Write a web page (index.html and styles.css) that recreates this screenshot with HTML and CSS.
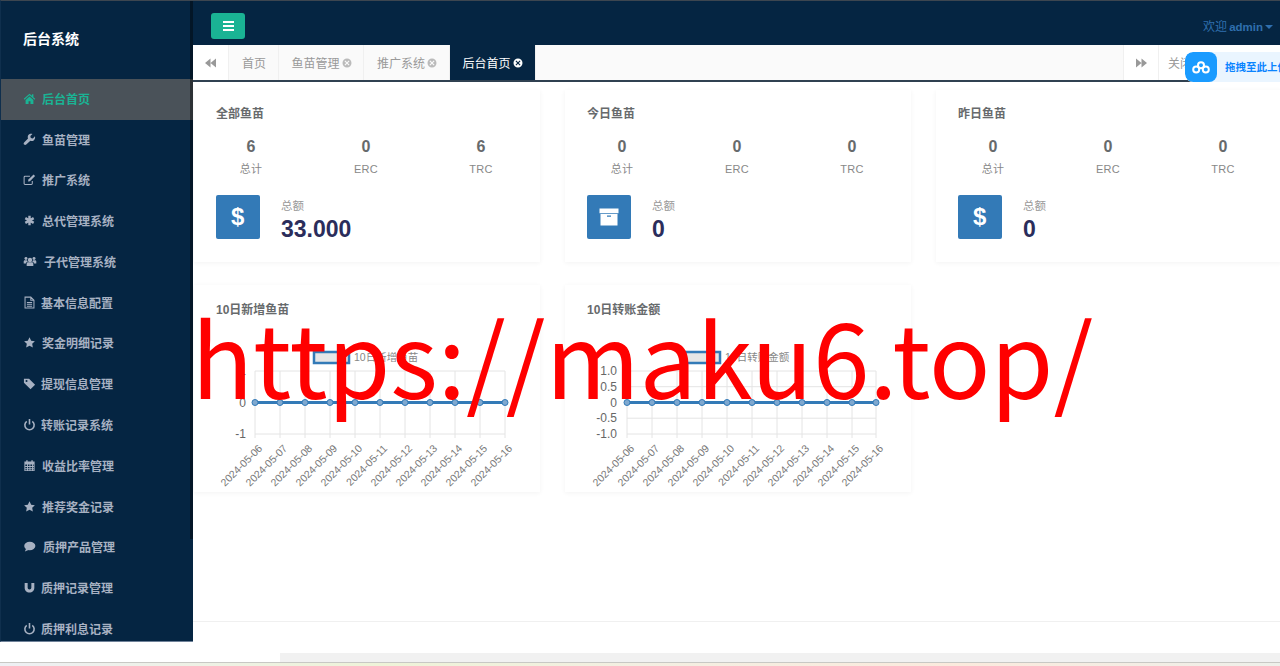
FILE: index.html
```html
<!DOCTYPE html>
<html lang="zh-CN">

<head>
    <meta charset="UTF-8">
    <meta name="viewport" content="width=device-width, initial-scale=1.0">
    <title>后台系统</title>
    <link rel="stylesheet" href="styles.css">
</head>

<body>
    <svg class="defs" width="0" height="0">
        <symbol id="i-home" viewBox="0 0 14 14"><path d="M7 1.800.8 7.400l.8.900L7 3.400l5.400 4.900.8-.9-2-1.800V2.400H9.600v1.700zM2.800 8.600 7 4.800l4.200 3.800v4.200H8V10H6v2.800H2.800z"/></symbol>
        <symbol id="i-wrench" viewBox="0 0 14 14"><path d="M12.900 3.600 10.600 5.800 8.400 5.300 7.900 3.200 10.200 1C8.500.5 6.700 1 5.800 2.200 5 3.300 4.900 4.700 5.400 5.800L1.200 10.200C.5 10.900.6 11.900 1.200 12.500 1.900 13.200 2.900 13.200 3.500 12.500L7.900 8.400C9.200 9 10.700 8.800 11.800 7.800 12.900 6.800 13.300 5.100 12.900 3.600z"/></symbol>
        <symbol id="i-edit" viewBox="0 0 14 14"><path d="M10 8.500V11.300C10 11.900 9.600 12.300 9 12.300H2.200C1.600 12.300 1.200 11.900 1.200 11.300V4.500C1.200 3.900 1.600 3.500 2.200 3.500H7.500" fill="none" stroke="currentColor" stroke-width="1.100"/><path d="M11.400 1.600 13 3.200 7.500 8.800 5.400 9.200 5.800 7.100z"/></symbol>
        <symbol id="i-asterisk" viewBox="0 0 14 14"><path d="M7 1.800v10.400M2.500 4.400l9 5.200M11.500 4.400l-9 5.200" fill="none" stroke="currentColor" stroke-width="2.600"/></symbol>
        <symbol id="i-users" viewBox="0 0 16 14"><circle cx="8" cy="5.300" r="2.500"/><circle cx="3.400" cy="3.600" r="1.700"/><circle cx="12.600" cy="3.600" r="1.700"/><path d="M4.200 12.200V9.600C4.200 8.500 5 7.800 6 7.800H10C11 7.800 11.800 8.500 11.800 9.600V12.200zM.8 9.300V7C.8 6 1.500 5.600 2.300 5.600H4.600C4.800 6.300 5.100 6.800 5.500 7.200 4.200 7.400 3.400 8.200 3.300 9.300zM15.200 9.300V7C15.200 6 14.500 5.600 13.700 5.600H11.400C11.200 6.300 10.900 6.800 10.500 7.200 11.800 7.400 12.600 8.200 12.700 9.300z"/></symbol>
        <symbol id="i-file" viewBox="0 0 14 14"><path d="M2.200 1.200H8.400L11.800 4.600V12.800H2.200zM8.400 1.200V4.600H11.800M4.200 7H9.800M4.200 9H9.800M4.200 11H9.800" fill="none" stroke="currentColor" stroke-width="1.100"/></symbol>
        <symbol id="i-star" viewBox="0 0 14 14"><path d="M7 1.300 8.800 5l4 .6-2.900 2.800.7 4L7 10.500l-3.600 1.900.7-4L1.200 5.600l4-.6z"/></symbol>
        <symbol id="i-tag" viewBox="0 0 14 14"><path fill-rule="evenodd" d="M1 1.800H6.500L13 8.300 8.100 13.200 1 6.300zM3.800 3.200A1.100 1.100 0 1 0 3.800 5.400 1.100 1.100 0 1 0 3.800 3.200z"/></symbol>
        <symbol id="i-power" viewBox="0 0 14 14"><path d="M4 3.600A5 5 0 1 0 10 3.600M7 1.200V7" fill="none" stroke="currentColor" stroke-width="1.700"/></symbol>
        <symbol id="i-calendar" viewBox="0 0 14 14"><path fill-rule="evenodd" d="M1.500 2.800H3.500V1.300H5V2.800H9V1.300H10.500V2.800H12.500V13H1.500zM2.500 6V7.600H4.300V6zM5.300 6V7.600H7V6zM8 6V7.600H9.700V6zM10.700 6V7.600H11.500V6zM2.500 8.500V10H4.300V8.500zM5.300 8.500V10H7V8.500zM8 8.500V10H9.700V8.500zM10.700 8.500V10H11.500V8.500zM2.500 11V12H4.300V11zM5.300 11V12H7V11zM8 11V12H9.700V11zM10.700 11V12H11.500V11z"/></symbol>
        <symbol id="i-comment" viewBox="0 0 14 14"><ellipse cx="7.300" cy="6.500" rx="6" ry="4.500"/><path d="M3.500 9 2 12.500 6.500 10.500z"/></symbol>
        <symbol id="i-magnet" viewBox="0 0 14 14"><path d="M1.800 2.200H5V7C5 8.300 5.800 9.100 7 9.100S9 8.300 9 7V2.200H12.200V7.200C12.200 10.200 10 12.500 7 12.500S1.800 10.200 1.800 7.200z"/></symbol>
        <symbol id="i-close" viewBox="0 0 10 10"><path fill-rule="evenodd" d="M5 .5a4.500 4.500 0 1 0 0 9 4.500 4.500 0 1 0 0-9zM3.300 2.500 5 4.200 6.700 2.500 7.500 3.300 5.800 5 7.500 6.700 6.700 7.500 5 5.800 3.300 7.500 2.500 6.700 4.200 5 2.500 3.300z"/></symbol>
        <symbol id="i-back" viewBox="0 0 12 10"><path d="M6 0v10L0 5zM12 0v10L6 5z"/></symbol>
    </svg>

    <div class="app">
        <aside class="sidebar">
            <div class="sidebar-thumb"></div>
            <div class="logo">后台系统</div>
            <ul class="nav">
                <li class="nav-item active"><svg class="icon"><use href="#i-home"/></svg>后台首页</li>
                <li class="nav-item"><svg class="icon"><use href="#i-wrench"/></svg>鱼苗管理</li>
                <li class="nav-item"><svg class="icon"><use href="#i-edit"/></svg>推广系统</li>
                <li class="nav-item"><svg class="icon"><use href="#i-asterisk"/></svg>总代管理系统</li>
                <li class="nav-item"><svg class="icon icon-wide"><use href="#i-users"/></svg>子代管理系统</li>
                <li class="nav-item"><svg class="icon icon-narrow"><use href="#i-file"/></svg>基本信息配置</li>
                <li class="nav-item"><svg class="icon"><use href="#i-star"/></svg>奖金明细记录</li>
                <li class="nav-item"><svg class="icon icon-narrow"><use href="#i-tag"/></svg>提现信息管理</li>
                <li class="nav-item"><svg class="icon icon-narrow"><use href="#i-power"/></svg>转账记录系统</li>
                <li class="nav-item"><svg class="icon"><use href="#i-calendar"/></svg>收益比率管理</li>
                <li class="nav-item"><svg class="icon"><use href="#i-star"/></svg>推荐奖金记录</li>
                <li class="nav-item"><svg class="icon icon-mid"><use href="#i-comment"/></svg>质押产品管理</li>
                <li class="nav-item"><svg class="icon icon-narrow"><use href="#i-magnet"/></svg>质押记录管理</li>
                <li class="nav-item"><svg class="icon icon-narrow"><use href="#i-power"/></svg>质押利息记录</li>
            </ul>
        </aside>

        <main class="main">
            <header class="topbar">
                <button class="menu-btn"><span></span><span></span><span></span></button>
                <div class="welcome"><span>欢迎</span><b>admin</b><i class="caret"></i></div>
            </header>

            <div class="tabs">
                <div class="tab-arrow"><svg class="arrow"><use href="#i-back"/></svg></div>
                <div class="tab">首页</div>
                <div class="tab">鱼苗管理<svg class="tab-close"><use href="#i-close"/></svg></div>
                <div class="tab">推广系统<svg class="tab-close"><use href="#i-close"/></svg></div>
                <div class="tab tab-active">后台首页<svg class="tab-close"><use href="#i-close"/></svg></div>
                <div class="tabs-space"></div>
                <div class="tab-arrow tab-arrow-right"><svg class="arrow arrow-flip"><use href="#i-back"/></svg></div>
                <div class="tab tab-last">关闭</div>
            </div>

            <div class="content">
                <section class="card">
                    <h5 class="card-title">全部鱼苗</h5>
                    <div class="stats">
                        <div class="stat"><b>6</b><span>总计</span></div>
                        <div class="stat"><b>0</b><span>ERC</span></div>
                        <div class="stat"><b>6</b><span>TRC</span></div>
                    </div>
                    <div class="total">
                        <div class="total-icon dollar">$</div>
                        <div class="total-text"><span>总额</span><b>33.000</b></div>
                    </div>
                </section>

                <section class="card">
                    <h5 class="card-title">今日鱼苗</h5>
                    <div class="stats">
                        <div class="stat"><b>0</b><span>总计</span></div>
                        <div class="stat"><b>0</b><span>ERC</span></div>
                        <div class="stat"><b>0</b><span>TRC</span></div>
                    </div>
                    <div class="total">
                        <div class="total-icon">
                            <svg width="20" height="18" viewBox="0 0 20 18" fill="#fff"><path d="M.5 .5h19v4.800H.5zM1.500 6h17v11.500h-17zM8 7.500v1.200h4V7.500z" fill-rule="evenodd"/></svg>
                        </div>
                        <div class="total-text"><span>总额</span><b>0</b></div>
                    </div>
                </section>

                <section class="card">
                    <h5 class="card-title">昨日鱼苗</h5>
                    <div class="stats">
                        <div class="stat"><b>0</b><span>总计</span></div>
                        <div class="stat"><b>0</b><span>ERC</span></div>
                        <div class="stat"><b>0</b><span>TRC</span></div>
                    </div>
                    <div class="total">
                        <div class="total-icon dollar">$</div>
                        <div class="total-text"><span>总额</span><b>0</b></div>
                    </div>
                </section>

                <section class="card chart-card">
                    <h5 class="card-title">10日新增鱼苗</h5>
                    <svg class="chart" width="346" height="170" viewBox="0 0 346 170">
                        <rect class="legend-box" x="120" y="19" width="35" height="11"/>
                        <text class="legend" x="160" y="28">10日新增鱼苗</text>
                        <g class="grid">
                            <path d="M61 38H311M61 69.500H311M61 101H311"/>
                            <path d="M61 38V105M86 38V105M111 38V105M136 38V105M161 38V105M186 38V105M211 38V105M236 38V105M261 38V105M286 38V105M311 38V105"/>
                        </g>
                        <g class="y-labels">
                            <text x="52" y="42">1</text>
                            <text x="52" y="73.500">0</text>
                            <text x="52" y="105">-1</text>
                        </g>
                        <path class="line" d="M61 69.500H311"/>
                        <g class="dots">
                            <circle cx="61" cy="69.500" r="3"/><circle cx="86" cy="69.500" r="3"/><circle cx="111" cy="69.500" r="3"/><circle cx="136" cy="69.500" r="3"/><circle cx="161" cy="69.500" r="3"/><circle cx="186" cy="69.500" r="3"/><circle cx="211" cy="69.500" r="3"/><circle cx="236" cy="69.500" r="3"/><circle cx="261" cy="69.500" r="3"/><circle cx="286" cy="69.500" r="3"/><circle cx="311" cy="69.500" r="3"/>
                        </g>
                        <g class="x-labels">
                            <text transform="translate(69 116) rotate(-45)">2024-05-06</text>
                            <text transform="translate(94 116) rotate(-45)">2024-05-07</text>
                            <text transform="translate(119 116) rotate(-45)">2024-05-08</text>
                            <text transform="translate(144 116) rotate(-45)">2024-05-09</text>
                            <text transform="translate(169 116) rotate(-45)">2024-05-10</text>
                            <text transform="translate(194 116) rotate(-45)">2024-05-11</text>
                            <text transform="translate(219 116) rotate(-45)">2024-05-12</text>
                            <text transform="translate(244 116) rotate(-45)">2024-05-13</text>
                            <text transform="translate(269 116) rotate(-45)">2024-05-14</text>
                            <text transform="translate(294 116) rotate(-45)">2024-05-15</text>
                            <text transform="translate(319 116) rotate(-45)">2024-05-16</text>
                        </g>
                    </svg>
                </section>

                <section class="card chart-card">
                    <h5 class="card-title">10日转账金额</h5>
                    <svg class="chart" width="346" height="170" viewBox="0 0 346 170">
                        <rect class="legend-box" x="120" y="19" width="35" height="11"/>
                        <text class="legend" x="160" y="28">10日转账金额</text>
                        <g class="grid">
                            <path d="M62 38H311M62 53.700H311M62 69.500H311M62 85.200H311M62 101H311"/>
                            <path d="M62 38V105M87 38V105M112 38V105M137 38V105M162 38V105M187 38V105M212 38V105M237 38V105M262 38V105M287 38V105M311 38V105"/>
                        </g>
                        <g class="y-labels">
                            <text x="52" y="42">1.0</text>
                            <text x="52" y="57.700">0.5</text>
                            <text x="52" y="73.500">0</text>
                            <text x="52" y="89.200">-0.5</text>
                            <text x="52" y="105">-1.0</text>
                        </g>
                        <path class="line" d="M62 69.500H311"/>
                        <g class="dots">
                            <circle cx="62" cy="69.500" r="3"/><circle cx="87" cy="69.500" r="3"/><circle cx="112" cy="69.500" r="3"/><circle cx="137" cy="69.500" r="3"/><circle cx="162" cy="69.500" r="3"/><circle cx="187" cy="69.500" r="3"/><circle cx="212" cy="69.500" r="3"/><circle cx="237" cy="69.500" r="3"/><circle cx="262" cy="69.500" r="3"/><circle cx="287" cy="69.500" r="3"/><circle cx="311" cy="69.500" r="3"/>
                        </g>
                        <g class="x-labels">
                            <text transform="translate(70 116) rotate(-45)">2024-05-06</text>
                            <text transform="translate(95 116) rotate(-45)">2024-05-07</text>
                            <text transform="translate(120 116) rotate(-45)">2024-05-08</text>
                            <text transform="translate(145 116) rotate(-45)">2024-05-09</text>
                            <text transform="translate(170 116) rotate(-45)">2024-05-10</text>
                            <text transform="translate(195 116) rotate(-45)">2024-05-11</text>
                            <text transform="translate(220 116) rotate(-45)">2024-05-12</text>
                            <text transform="translate(245 116) rotate(-45)">2024-05-13</text>
                            <text transform="translate(270 116) rotate(-45)">2024-05-14</text>
                            <text transform="translate(295 116) rotate(-45)">2024-05-15</text>
                            <text transform="translate(319 116) rotate(-45)">2024-05-16</text>
                        </g>
                    </svg>
                </section>
            </div>

            <footer class="footer"></footer>
        </main>
    </div>

    <div class="bottom">
        <div class="scroll-track"></div>
    </div>
    <div class="taskbar"></div>

    <!-- 悬浮上传 -->
    <div class="upload">
        <div class="upload-logo">
            <svg width="18" height="13" viewBox="0 0 18 13" fill="none" stroke="#fff" stroke-width="2"><circle cx="9" cy="4.200" r="3"/><circle cx="4.200" cy="8.600" r="3"/><circle cx="13.800" cy="8.600" r="3"/></svg>
        </div>
        <div class="upload-text">拖拽至此上传</div>
    </div>

    <div class="watermark">https://maku6.top/</div>
</body>

</html>
```

FILE: styles.css
```css
* {
    box-sizing: border-box;
}

html,
body {
    height: 666px;
}

body {
    margin: 0;
    overflow: hidden;
    position: relative;
    background-color: #fff;
    color: #676a6c;
    font-family: "Liberation Sans", "Noto Sans CJK SC", sans-serif;
    font-size: 12px;
}

.defs {
    display: block;
    height: 0;
}

.app {
    display: flex;
    height: 642px;
}

/* 左侧菜单 */
.sidebar {
    position: relative;
    width: 193px;
    flex: none;
    background-color: #052542;
    border-top: 1px solid #3d4650;
    border-left: 1px solid #0f2f4d;
    border-bottom: 1px solid #6f8299;
    overflow: hidden;
}

.sidebar-thumb {
    position: absolute;
    top: 0;
    right: 0;
    width: 3px;
    height: 538px;
    background-color: rgba(0, 0, 0, 0.4);
}

.logo {
    height: 78px;
    padding: 29px 0 0 22px;
    color: #fff;
    font-size: 14px;
    font-weight: bold;
    line-height: 18px;
}

.nav {
    list-style: none;
    margin: 0;
    padding: 0;
}

.nav-item {
    display: flex;
    align-items: center;
    height: 40.77px;
    padding: 0 0 2px 22px;
    color: #a7b1c2;
    font-weight: bold;
    white-space: nowrap;
}

.nav-item.active {
    background-color: #4a5259;
    color: #1ab394;
}

.icon {
    width: 13px;
    height: 13px;
    margin-right: 6px;
    fill: currentColor;
    flex: none;
}

.icon-wide {
    margin-right: 7px;
    width: 14px;
}

.icon-narrow {
    margin-right: 5px;
}

.icon-mid {
    margin-right: 7px;
}

.main {
    flex: 1;
    min-width: 0;
    display: flex;
    flex-direction: column;
}

/* 顶部 */
.topbar {
    height: 45px;
    flex: none;
    display: flex;
    align-items: flex-start;
    justify-content: space-between;
    padding: 13px 7px 0 18px;
    background-color: #052542;
    border-top: 1px solid #3d4650;
}

.menu-btn {
    width: 34px;
    height: 26px;
    margin-top: -1px;
    padding: 0;
    display: flex;
    flex-direction: column;
    align-items: center;
    justify-content: center;
    gap: 2px;
    border: 0;
    border-radius: 3px;
    background-color: #1ab394;
}

.menu-btn span {
    display: block;
    width: 11px;
    height: 2px;
    background-color: #fff;
}

.welcome {
    display: flex;
    align-items: center;
    gap: 2px;
    margin-top: 5px;
    color: #2f6fae;
    font-size: 12px;
    line-height: 16px;
}

.welcome b {
    font-size: 11.5px;
}

.caret {
    border-top: 4px solid #2f6fae;
    border-left: 4px solid transparent;
    border-right: 4px solid transparent;
}

/* 页签 */
.tabs {
    height: 37px;
    flex: none;
    display: flex;
    background-color: #fff;
    border-bottom: 2px solid #2f4050;
}

.tab-arrow {
    width: 36px;
    flex: none;
    display: flex;
    align-items: center;
    justify-content: center;
    border-right: 1px solid #f0f0f0;
}

.tab-arrow-right {
    border-left: 1px solid #f0f0f0;
}

.arrow {
    width: 11px;
    height: 10px;
    fill: #999;
}

.arrow-flip {
    transform: scaleX(-1);
}

.tab {
    display: flex;
    align-items: center;
    gap: 2px;
    padding: 0 11.5px 0 13px;
    color: #999;
    background-color: #fafafa;
    border-right: 1px solid #f0f0f0;
    white-space: nowrap;
}

.tab-active {
    padding-right: 12.5px;
    background-color: #052542;
    color: #fff;
}

.tab-close {
    width: 10px;
    height: 10px;
    fill: #bbb;
}

.tab-active .tab-close {
    fill: #fff;
}

.tabs-space {
    flex: 1;
    background-color: #fafafa;
}

.tab-last {
    width: 121px;
    flex: none;
    padding: 0 0 0 9px;
    background-color: #fff;
    border-right: 0;
}

/* 卡片 */
.content {
    flex: 1;
    display: grid;
    grid-template-columns: repeat(3, 346px);
    grid-template-rows: 172px 207px;
    column-gap: 25px;
    row-gap: 23px;
    padding: 8px 0 0 1px;
    overflow: hidden;
}

.card {
    background-color: #fff;
    padding: 17px 22px 0;
    box-shadow: 0 1px 5px rgba(0, 0, 0, 0.05);
}

.card-title {
    margin: 0;
    font-size: 12px;
    font-weight: bold;
    line-height: 14px;
}

.stats {
    display: grid;
    grid-template-columns: repeat(3, 115px);
    margin: 15px 0 0 -22.5px;
    text-align: center;
}

.stat b {
    display: block;
    font-size: 16px;
    line-height: 22px;
}

.stat span {
    display: block;
    margin-top: 4px;
    color: #888;
    font-size: 11px;
    line-height: 14px;
    letter-spacing: 0.3px;
}

.total {
    display: flex;
    align-items: flex-start;
    gap: 21.5px;
    margin-top: 19px;
}

.total-icon {
    width: 43.5px;
    height: 44px;
    display: flex;
    align-items: center;
    justify-content: center;
    flex: none;
    border-radius: 2px;
    background-color: #337ab7;
    color: #fff;
    font-size: 24px;
    font-weight: bold;
}

.total-text {
    padding-top: 4px;
}

.total-text span {
    display: block;
    color: #999;
    font-size: 11.5px;
    line-height: 14px;
}

.total-text b {
    display: block;
    margin-top: 2px;
    color: #2b2d5b;
    font-size: 23px;
    line-height: 28px;
}

.chart-card {
    padding-top: 18px;
}

.chart {
    display: block;
    margin: 16px -22px 0;
    overflow: visible;
}

.legend-box {
    fill: #e6e6e6;
    stroke: #337ab7;
    stroke-width: 2.5;
}

.legend {
    fill: #888;
    font-size: 10.5px;
}

.grid path {
    fill: none;
    stroke: #e4e4e4;
    stroke-width: 1;
}

.y-labels text {
    fill: #666;
    font-size: 12px;
    text-anchor: end;
}

.line {
    fill: none;
    stroke: #337ab7;
    stroke-width: 3;
}

.dots circle {
    fill: #7fa8cf;
    stroke: #337ab7;
    stroke-width: 1;
}

.x-labels text {
    fill: #777;
    font-size: 10.5px;
    text-anchor: end;
}

.footer {
    height: 21px;
    flex: none;
    border-top: 1px solid #f0f0f0;
}

.bottom {
    height: 20px;
    padding: 11px 0 0 280px;
}

.scroll-track {
    height: 9px;
    background-color: #f1f1f1;
}

.taskbar {
    height: 4px;
    background: linear-gradient(90deg, #eef0f4 0%, #eef3d8 30%, #f3efe2 50%, #fbeadd 75%, #eef0ea 100%);
    border-top: 1px solid #c8c8c4;
}

/* 悬浮上传 */
.upload {
    position: absolute;
    left: 1185px;
    top: 52px;
    width: 95px;
    height: 30px;
    display: flex;
    overflow: hidden;
    border-radius: 8px 0 0 8px;
    background-color: #eaf5ff;
}

.upload-logo {
    width: 32px;
    flex: none;
    display: flex;
    align-items: center;
    justify-content: center;
    background-color: #1a9bff;
    border-radius: 8px;
}

.upload-text {
    padding-left: 8px;
    color: #0a84ff;
    font-size: 10.5px;
    font-weight: bold;
    line-height: 31px;
    white-space: nowrap;
}

/* 水印 */
.watermark {
    position: absolute;
    left: 191.5px;
    top: 281.5px;
    color: #ff0000;
    font-family: "Noto Sans CJK SC", sans-serif;
    font-size: 101.5px;
    line-height: 146px;
    white-space: nowrap;
}
```
